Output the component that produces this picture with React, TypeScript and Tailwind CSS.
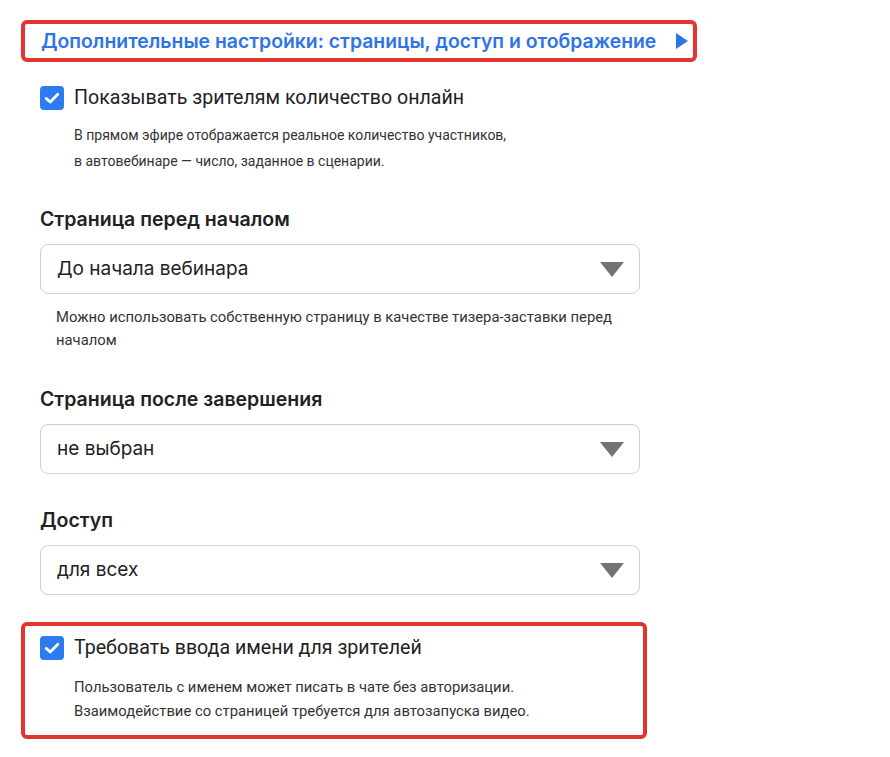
import React from "react";

const Check = () => (
  <span className="flex h-6 w-6 shrink-0 items-center justify-center rounded-[4px] bg-[#2d7bf0]">
    <svg width="24" height="24" viewBox="0 0 24 24" fill="none">
      <path d="M6.2 12.4 L10.2 16 L17.8 8.2" stroke="white" strokeWidth="2.8" strokeLinecap="round" strokeLinejoin="round" />
    </svg>
  </span>
);

const Select = ({ value }: { value: string }) => (
  <div className="flex h-[50px] w-[600px] items-center justify-between rounded-[8px] border border-[#cfcfcf] bg-white pl-4 pr-[15px]">
    <span className="text-[19px] leading-[24px] text-[#222]">{value}</span>
    <svg width="24" height="15" viewBox="0 0 24 15">
      <path d="M0 0 H24 L12 15 Z" fill="#737373" />
    </svg>
  </div>
);

export default function App() {
  return (
    <div className="min-h-[757px] w-[890px] bg-white font-['Inter',sans-serif] text-[#222]">
      <div className="pt-5 pl-[21px]">
        <div className="flex h-[42px] w-[676px] items-center justify-between rounded-[6px] border-4 border-[#e0362f] pl-4 pr-[5px]">
          <span className="text-[19.4px] font-semibold leading-[26px] text-[#2f74e6]">
            Дополнительные настройки: страницы, доступ и отображение
          </span>
          <svg width="12" height="16" viewBox="0 0 12 16">
            <path d="M0 0 L12 8 L0 16 Z" fill="#2f74e6" />
          </svg>
        </div>
      </div>

      <div className="mt-6 pl-10">
        <div className="flex items-center gap-[10px]">
          <Check />
          <span className="font-['Roboto',sans-serif] text-[19.6px] leading-[24px] text-[#222]">Показывать зрителям количество онлайн</span>
        </div>
        <div className="mt-3 pl-[34px] font-['Roboto',sans-serif] text-[14px] leading-[26px] text-[#333]">
          <div>В прямом эфире отображается реальное количество участников,</div>
          <div>в автовебинаре — число, заданное в сценарии.</div>
        </div>

        <div className="mt-8 text-[19.5px] font-semibold leading-[26px] text-[#222]">Страница перед началом</div>
        <div className="mt-3">
          <Select value="До начала вебинара" />
        </div>
        <div className="mt-3 w-[590px] pl-4 font-['Roboto',sans-serif] text-[14.8px] leading-[23px] text-[#333]">
          Можно использовать собственную страницу в качестве тизера-заставки перед началом
        </div>

        <div className="mt-[34px] text-[19.5px] font-semibold leading-[26px] text-[#222]">Страница после завершения</div>
        <div className="mt-3">
          <Select value="не выбран" />
        </div>

        <div className="mt-[33px] text-[19.5px] font-semibold leading-[26px] text-[#222]">Доступ</div>
        <div className="mt-3">
          <Select value="для всех" />
        </div>
      </div>

      <div className="mt-[27px] pl-[21px]">
        <div className="w-[626px] rounded-[6px] border-4 border-[#e0362f] pt-[10px] pb-[12px] pl-[15px]">
          <div className="flex items-center gap-[10px]">
            <Check />
            <span className="font-['Roboto',sans-serif] text-[19.6px] leading-[24px] text-[#222]">Требовать ввода имени для зрителей</span>
          </div>
          <div className="mt-[15px] pl-[34px] font-['Roboto',sans-serif] text-[14.8px] leading-[24px] text-[#333]">
            <div>Пользователь с именем может писать в чате без авторизации.</div>
            <div>Взаимодействие со страницей требуется для автозапуска видео.</div>
          </div>
        </div>
      </div>
    </div>
  );
}
